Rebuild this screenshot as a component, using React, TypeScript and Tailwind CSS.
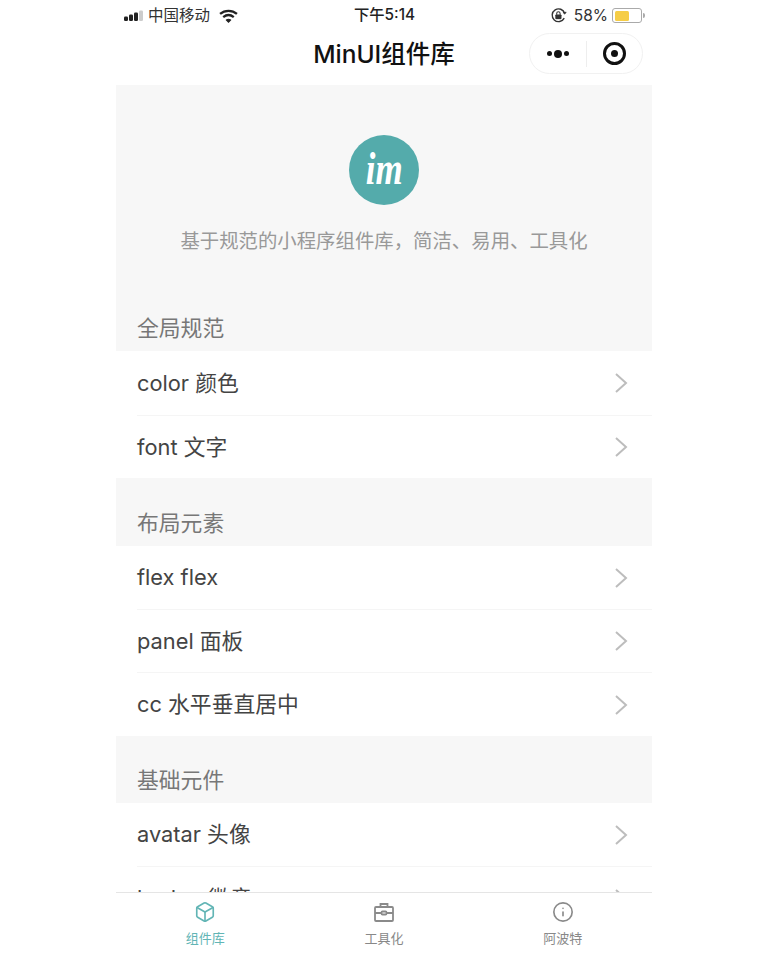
import { Box, Info } from "lucide-react";

const sections = [
  {
    title: "全局规范",
    top: "h-[85px]",
    items: [
      { label: "color 颜色", h: "h-[64px]" },
      { label: "font 文字", h: "h-[62px]" },
    ],
  },
  {
    title: "布局元素",
    top: "h-[68px]",
    items: [
      { label: "flex flex", h: "h-[63px]" },
      { label: "panel 面板", h: "h-[62px]" },
      { label: "cc 水平垂直居中", h: "h-[63px]" },
    ],
  },
  {
    title: "基础元件",
    top: "h-[67px]",
    items: [
      { label: "avatar 头像", h: "h-[63px]" },
      { label: "badge 徽章", h: "h-[63px]" },
    ],
  },
];

const StatusBar = () => (
  <div className="relative flex h-[31px] items-center justify-between pl-[8px] pr-[7px] text-[15.5px] text-[#333]">
    <div className="flex items-center">
      {/* signal */}
      <svg width="22" height="12" viewBox="0 0 22 12" className="mr-[3px]">
        <rect x="0" y="6.500" width="4" height="4.500" rx="1.200" fill="#222" />
        <rect x="5" y="4.500" width="4" height="6.500" rx="1.200" fill="#222" />
        <rect x="10" y="2.500" width="4" height="8.500" rx="1.200" fill="#222" />
        <rect x="15" y="0.500" width="4" height="10.500" rx="1.200" fill="#ccc" />
      </svg>
      <span className="mr-[9px] -ml-[1px]">中国移动</span>
      <svg width="19" height="14" viewBox="0 0 18 13" fill="none" stroke="#222" strokeWidth="2.200">
        <path d="M1 4.600C5.600.6 12.400.6 17 4.600" />
        <path d="M4 7.600c3-2.400 7-2.400 10 0" />
        <path d="M7 10.300c1.200-.9 2.800-.9 4 0L9 12.400z" fill="#222" strokeWidth="1" />
      </svg>
    </div>
    <span className="absolute left-[238px] text-[15.3px] font-medium text-[#222]">下午5:14</span>
    <div className="flex items-center">
      <svg width="17" height="17" viewBox="0 0 16 16" fill="none" stroke="#333" className="mr-[7px]">
        <path d="M13.400 10.500A6 6 0 1 1 13.800 6" strokeWidth="1.300" />
        <path d="M12.200 5.200l1.800 1.600 1.300-2z" fill="#333" strokeWidth=".5" />
        <rect x="5.200" y="7.200" width="5.400" height="4" rx=".6" fill="#333" strokeWidth=".4" />
        <path d="M6.300 7.200V6a1.600 1.600 0 0 1 3.200 0v1.200" strokeWidth="1" />
      </svg>
      <span className="mr-[4px]">58%</span>
      <div className="flex items-center">
        <div className="flex h-[15px] w-[30px] items-center rounded-[3px] border border-[#aaa] p-[1.500px]">
          <div className="h-full w-[58%] rounded-[1.500px] bg-[#f6cd46]" />
        </div>
        <div className="ml-[1px] h-[5px] w-[2px] rounded-r-sm bg-[#aaa]" />
      </div>
    </div>
  </div>
);

const NavBar = () => (
  <div className="relative flex h-[54px] shrink-0 items-center justify-center pb-[7px]">
    <span className="text-[24.500px] font-medium text-[#111]">MinUI组件库</span>
    <div className="absolute right-[9px] top-[2px] flex h-[41px] w-[114px] items-center rounded-full border border-[#f1f1f1]">
      <div className="flex w-[56px] items-center justify-center gap-[2px]">
        <span className="h-[5px] w-[5px] rounded-full bg-[#111]" />
        <span className="h-[8px] w-[8px] rounded-full bg-[#111]" />
        <span className="h-[5px] w-[5px] rounded-full bg-[#111]" />
      </div>
      <div className="h-[26px] w-px bg-[#eee]" />
      <div className="flex flex-1 items-center justify-center">
        <div className="flex h-[23px] w-[23px] items-center justify-center rounded-full border-[3px] border-[#111]">
          <span className="h-[7px] w-[7px] rounded-full bg-[#111]" />
        </div>
      </div>
    </div>
  </div>
);

const Logo = () => (
  <div className="flex h-[70px] w-[70px] items-center justify-center rounded-full bg-[#54abab]">
    <span className="-mt-[2px] scale-x-[.76] font-['Liberation_Serif',serif] text-[46px] leading-none font-bold text-white italic">
      im
    </span>
  </div>
);

const ToolboxIcon = () => (
  <svg width="22" height="22" viewBox="0 0 22 22" fill="none" stroke="#8a8a8a" strokeWidth="1.800">
    <path d="M7.500 6V3h7v3" />
    <rect x="2" y="6" width="18" height="14" rx="1" />
    <path d="M2 12h6M14 12h6" />
    <rect x="8.500" y="10.500" width="5" height="3" rx="1" />
  </svg>
);

const Row = ({ label, h }: { label: string; h: string }) => (
  <div className={`flex ${h} items-center justify-between bg-white pl-[21px] pr-[24px]`}>
    <span className="text-[21.800px] text-[#444]">{label}</span>
    <svg width="14" height="22" viewBox="0 0 14 22" fill="none" stroke="#bdbdbd" strokeWidth="2">
      <path d="M2 2l10 9-10 9" />
    </svg>
  </div>
);

export default function App() {
  return (
    <div className="flex h-[957px] w-[768px] justify-center bg-white font-['Inter','Noto_Sans_CJK_SC',sans-serif]">
      <div className="flex h-full w-[536px] flex-col">
        <StatusBar />
        <NavBar />
        <div className="flex-1 overflow-hidden bg-[#f7f7f7]">
          <div className="flex h-[181px] flex-col items-center pt-[50px]">
            <Logo />
            <p className="mt-[24px] text-[19.400px] leading-[24px] text-[#999]">
              基于规范的小程序组件库，简洁、易用、工具化
            </p>
          </div>
          {sections.map((s) => (
            <div key={s.title}>
              <div className={`flex ${s.top} items-end pb-[9px] pl-[21px] text-[21.800px] leading-[28px] text-[#777]`}>
                {s.title}
              </div>
              {s.items.map((item, i) => (
                <div key={item.label}>
                  {i > 0 && (
                    <div className="bg-white pl-[21px]">
                      <div className="h-px bg-[#f5f5f5]" />
                    </div>
                  )}
                  <Row label={item.label} h={item.h} />
                </div>
              ))}
            </div>
          ))}
        </div>
        <div className="grid h-[65px] shrink-0 grid-cols-3 border-t border-[#e5e5e5] bg-white">
          <div className="flex flex-col items-center pt-[8px]">
            <Box size={22} strokeWidth={1.800} color="#62b5b5" />
            <span className="mt-[6px] text-[13px] leading-[18px] text-[#62b5b5]">组件库</span>
          </div>
          <div className="flex flex-col items-center pt-[8px]">
            <ToolboxIcon />
            <span className="mt-[6px] text-[13px] leading-[18px] text-[#888]">工具化</span>
          </div>
          <div className="flex flex-col items-center pt-[8px]">
            <Info size={22} strokeWidth={1.800} color="#8a8a8a" />
            <span className="mt-[6px] text-[13px] leading-[18px] text-[#888]">阿波特</span>
          </div>
        </div>
      </div>
    </div>
  );
}
